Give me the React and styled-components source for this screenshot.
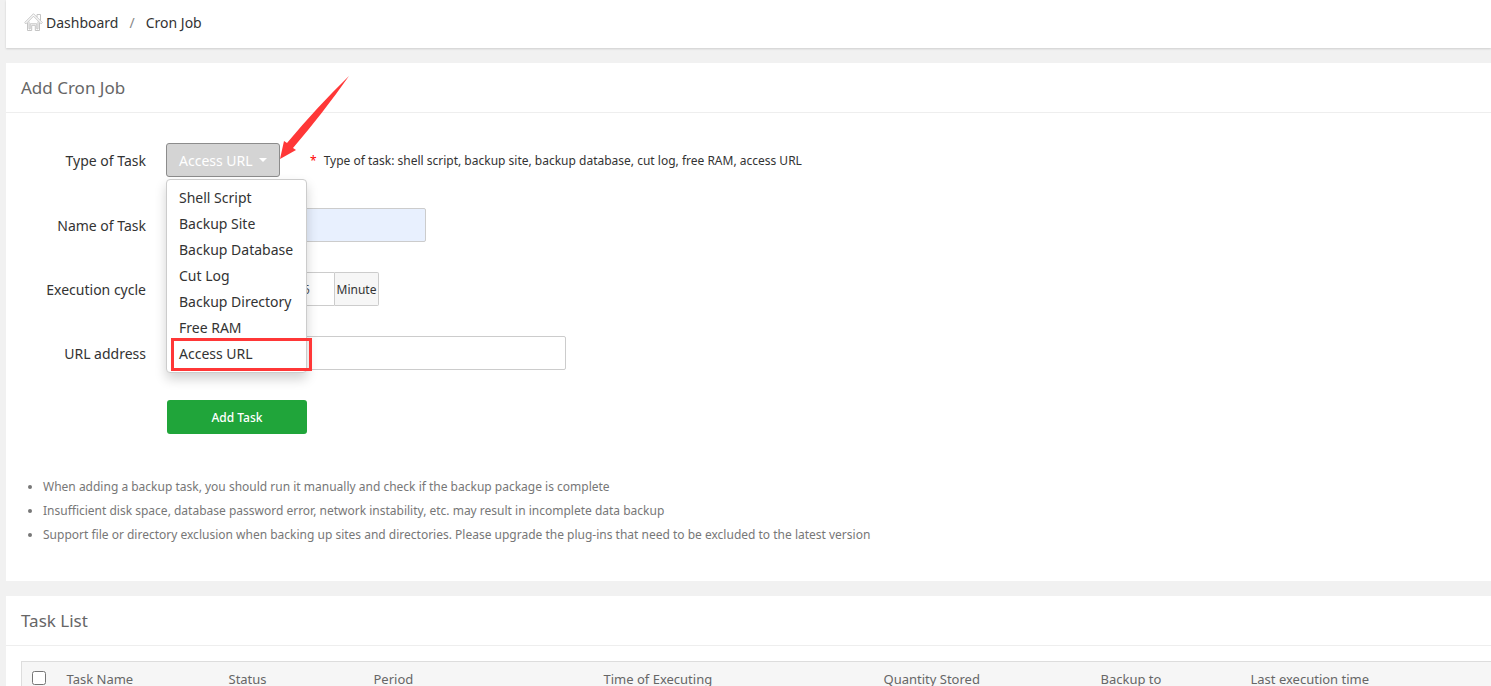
import React, { useState } from 'react';
import styled, { createGlobalStyle } from 'styled-components';

const GlobalStyle = createGlobalStyle`
    * {
        box-sizing: border-box;
    }
    html {
        scrollbar-width: none;
    }
    body {
        margin: 0;
        background-color: #f1f1f1;
        color: #333;
        font-family: "Noto Sans", "Open Sans", sans-serif;
        font-size: 14px;
    }
    button, input {
        font-family: inherit;
    }
`;

const Page = styled.div`
    padding-left: 6px;
`;

const Breadcrumb = styled.nav`
    height: 48px;
    padding: 0 18px 4px;
    display: flex;
    align-items: center;
    background-color: white;
    box-shadow: 0 1px 2px rgba(0, 0, 0, 0.15);
`;

const Crumb = styled.a`
    display: flex;
    align-items: center;
    gap: 3px;
    color: #333;
    text-decoration: none;
`;

const Slash = styled.span`
    padding: 0 11px;
    color: #888;
`;

const Panel = styled.section`
    margin-top: 15px;
    background-color: white;
`;

const Title = styled.h2`
    margin: 0;
    padding: 0 15px;
    border-bottom: 1px solid #eee;
    color: #666;
    font-size: 17px;
    font-weight: normal;
    line-height: 49px;
`;

const Form = styled.form`
    padding: 30px 15px 34px;
    display: flex;
    flex-direction: column;
    gap: 30px;
`;

const Row = styled.div`
    display: flex;
    align-items: center;
    min-height: 34px;
`;

const Label = styled.label`
    width: 125px;
    margin-right: 20px;
    text-align: right;
`;

const Dropdown = styled.div`
    position: relative;
    padding-bottom: 1px;
`;

const DropdownButton = styled.button`
    width: 114px;
    height: 34px;
    padding: 0 12px;
    display: flex;
    align-items: center;
    justify-content: space-between;
    border: 1px solid #8c8c8c;
    border-radius: 3px;
    background-color: #d4d4d4;
    color: white;
    font-size: 14px;
    white-space: nowrap;
`;

const Caret = styled.span`
    border-top: 4px solid;
    border-left: 4px solid transparent;
    border-right: 4px solid transparent;
`;

const Menu = styled.ul`
    position: absolute;
    top: 36px;
    left: 0;
    z-index: 2;
    width: 141px;
    margin: 0;
    padding: 5px 0;
    list-style: none;
    border: 1px solid #ccc;
    border-radius: 4px;
    background-color: white;
    box-shadow: 0 6px 12px rgba(0, 0, 0, 0.18);
`;

const MenuItem = styled.button`
    display: block;
    width: 100%;
    padding: 0 12px;
    border: none;
    background: none;
    color: #333;
    font-size: 14px;
    line-height: 26px;
    text-align: left;
    white-space: nowrap;
`;

const Marker = styled.div`
    position: absolute;
    top: 195px;
    left: 5px;
    z-index: 3;
    width: 141px;
    height: 33px;
    border: 3px solid #ff3737;
    pointer-events: none;
`;

const Arrow = styled.svg`
    position: absolute;
    top: -68px;
    left: 113px;
    z-index: 3;
    pointer-events: none;
`;

const Hint = styled.span`
    padding-left: 30px;
    display: flex;
    gap: 7px;
    font-size: 12px;
`;

const Star = styled.span`
    color: red;
`;

const Input = styled.input`
    width: ${props => props.$width};
    height: 34px;
    padding: 0 10px;
    border: 1px solid #ccc;
    border-radius: ${props => (props.$joined ? "2px 0 0 2px" : "2px")};
    background-color: ${props => (props.$filled ? "#e8f0fe" : "white")};
    color: #555;
    font-size: 12px;
`;

const Cycle = styled.button`
    width: 114px;
    height: 34px;
    margin-right: 12px;
    border: 1px solid #ccc;
    border-radius: 2px;
    background-color: white;
    color: #555;
    font-size: 12px;
`;

const Unit = styled.span`
    width: 44px;
    height: 34px;
    border: 1px solid #ccc;
    border-left: none;
    border-radius: 0 2px 2px 0;
    background-color: #f6f6f6;
    font-size: 12px;
    line-height: 33px;
    text-align: center;
`;

const Submit = styled.button`
    width: 140px;
    height: 34px;
    margin-left: 146px;
    border: none;
    border-radius: 3px;
    background-color: #20a53a;
    color: white;
    font-size: 12px;
    font-weight: 500;
`;

const Tips = styled.ul`
    margin: 0;
    padding: 7px 15px 34px 37px;
    color: #777;
    font-size: 12px;
    line-height: 24px;
`;

const TableWrap = styled.div`
    padding: 15px 0 15px 15px;
`;

const Table = styled.table`
    width: 100%;
    table-layout: fixed;
    border-collapse: collapse;
    border: 1px solid #ddd;
    border-right: none;
    background-color: #f6f6f6;
    color: #666;
    font-size: 13px;
`;

const Head = styled.th`
    width: ${props => props.$width || "auto"};
    height: 34px;
    padding: 0 8px;
    font-weight: normal;
    text-align: left;
    white-space: nowrap;
`;

const Check = styled.input`
    display: block;
    width: 14px;
    height: 14px;
    margin: 0 2px 2px;
`;

const tasks = ["Shell Script", "Backup Site", "Backup Database", "Cut Log", "Backup Directory", "Free RAM", "Access URL"];

const columns = [
  { name: "Task Name", width: "162px" },
  { name: "Status", width: "145px" },
  { name: "Period", width: "230px" },
  { name: "Time of Executing", width: "280px" },
  { name: "Quantity Stored", width: "217px" },
  { name: "Backup to", width: "150px" },
  { name: "Last execution time" },
];

const Home = () => (
  <svg width="19" height="20" viewBox="0 0 19 20" fill="none" stroke="#c4c4c4" strokeWidth="1">
    <path d="M.7 10.600L9.500 1.800l8.800 8.800-1.200 1.200-7.600-7.600-7.600 7.600z" />
    <path d="M3.500 11v7.500h4.200v-5.200h3.600v5.200h4.200V11" />
    <path d="M5 9.600v7.300h1.200v-5.100h6.600v5.100H14V9.600" />
    <path d="M13 5V2.500h3.500V8.500" />
  </svg>
)

const App = () => {
  const [open, setOpen] = useState(true);
  const [task, setTask] = useState("Access URL");

  return (
    <Page>
        <GlobalStyle />
        <Breadcrumb>
            <Crumb href="#"><Home />Dashboard</Crumb>
            <Slash>/</Slash>
            <Crumb href="#">Cron Job</Crumb>
        </Breadcrumb>
        <Panel>
            <Title>Add Cron Job</Title>
            <Form onSubmit={e => e.preventDefault()}>
                <Row>
                    <Label htmlFor="type">Type of Task</Label>
                    <Dropdown>
                        <DropdownButton id="type" type="button" onClick={() => setOpen(!open)}>
                            {task}<Caret />
                        </DropdownButton>
                        {open && (
                            <Menu>
                                {tasks.map(item => (
                                    <li key={item}>
                                        <MenuItem type="button" onClick={() => setTask(item)}>{item}</MenuItem>
                                    </li>
                                ))}
                            </Menu>
                        )}
                        {open && <Marker />}
                        <Arrow width="71" height="85" viewBox="0 0 71 85">
                            <path d="M70 1Q38 32 8 68L5 66 1 84l16-9-3-2Q44 38 70 1z" fill="#ff3737" />
                        </Arrow>
                    </Dropdown>
                    <Hint><Star>*</Star>Type of task: shell script, backup site, backup database, cut log, free RAM, access URL</Hint>
                </Row>
                <Row>
                    <Label htmlFor="name">Name of Task</Label>
                    <Input id="name" $width="260px" $filled />
                </Row>
                <Row>
                    <Label htmlFor="cycle">Execution cycle</Label>
                    <Cycle type="button" aria-label="Cycle unit" />
                    <Input id="cycle" $width="43px" $joined defaultValue="5" />
                    <Unit>Minute</Unit>
                </Row>
                <Row>
                    <Label htmlFor="url">URL address</Label>
                    <Input id="url" $width="400px" />
                </Row>
                <Submit>Add Task</Submit>
            </Form>
            <Tips>
                <li>When adding a backup task, you should run it manually and check if the backup package is complete</li>
                <li>Insufficient disk space, database password error, network instability, etc. may result in incomplete data backup</li>
                <li>Support file or directory exclusion when backing up sites and directories. Please upgrade the plug-ins that need to be excluded to the latest version</li>
            </Tips>
        </Panel>
        <Panel>
            <Title>Task List</Title>
            <TableWrap>
                <Table>
                    <thead>
                        <tr>
                            <Head $width="37px"><Check type="checkbox" aria-label="Select all" /></Head>
                            {columns.map(col => (
                                <Head key={col.name} $width={col.width}>{col.name}</Head>
                            ))}
                        </tr>
                    </thead>
                </Table>
            </TableWrap>
        </Panel>
    </Page>
  )
}

export default App
